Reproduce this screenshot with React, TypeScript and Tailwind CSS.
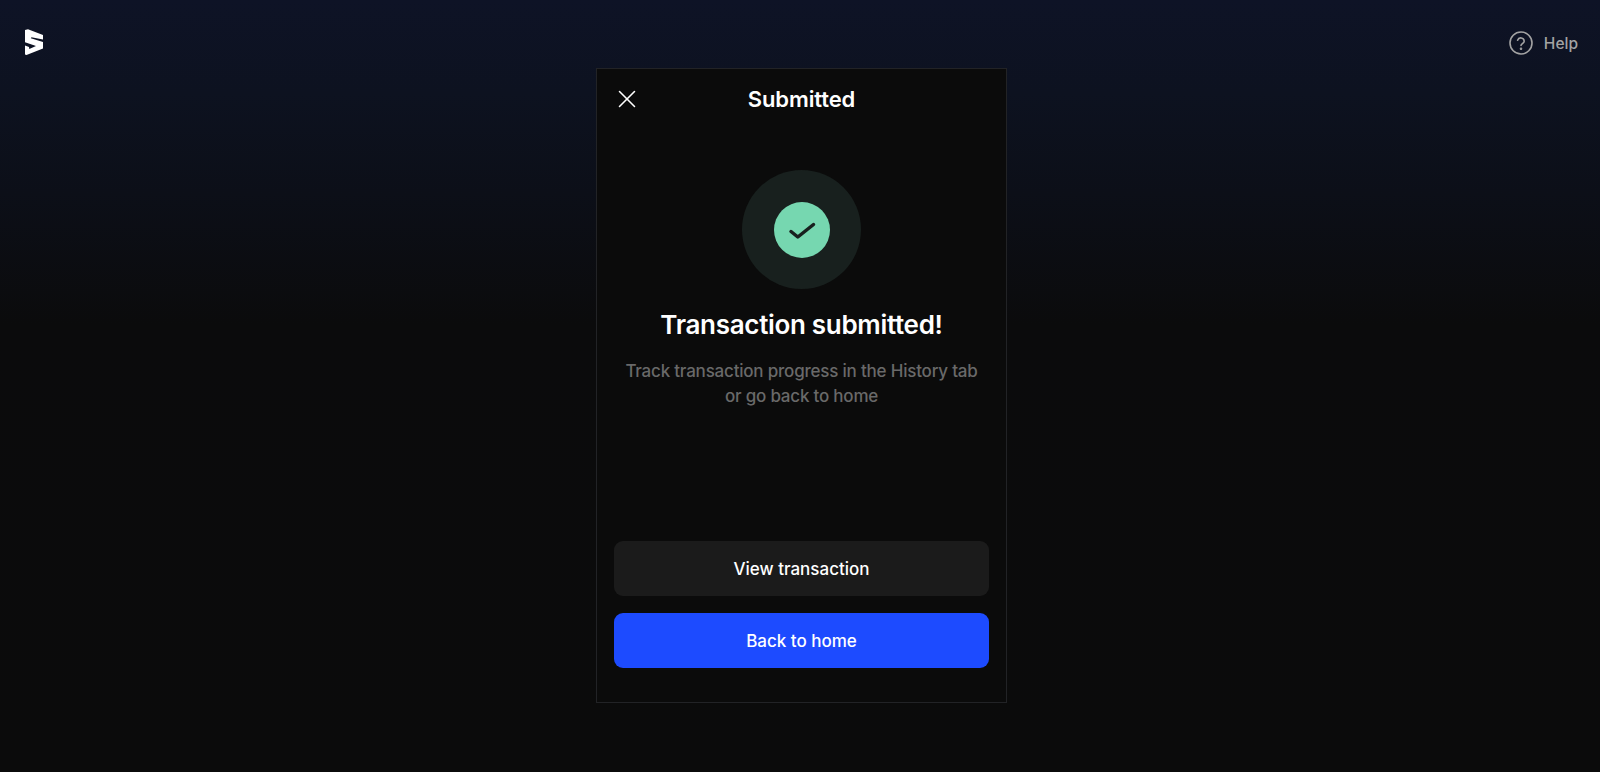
import { X } from "lucide-react";

const fontStack = "font-['Inter','Noto_Sans',sans-serif]";

function Logo() {
  return (
    <svg className="w-[18px] h-[27px]" viewBox="0 0 18 27" fill="#ffffff">
      <path d="M0 1 L3 0.3 L18 6 V10.5 L6.5 8.2 L5.8 9.2 L18 13 V19.5 L1.5 26 L0 25.5 V16.5 L4 18 L4.3 20 L11 17 L0 13.2 Z" />
    </svg>
  );
}

function HelpIcon() {
  return (
    <svg className="w-6 h-6" viewBox="0 0 24 24" fill="none" stroke="#a3a3a3" strokeWidth={1.6} strokeLinecap="round" strokeLinejoin="round">
      <circle cx="12" cy="12" r="11" />
      <path d="M8.6 9.2a3.4 3.4 0 0 1 6.6 1c0 2.2-3.2 2.6-3.2 4.3" />
      <circle cx="12" cy="17.8" r="0.5" fill="#a3a3a3" />
    </svg>
  );
}

export default function App() {
  return (
    <div className={`h-[772px] overflow-hidden flex bg-[linear-gradient(180deg,#0e1326_0%,#0d1220_12%,#0c0f18_25%,#0b0b0c_42%,#0b0b0b_100%)] ${fontStack}`}>
      <div className="w-[596px] shrink-0 pl-[25px] pt-[29px]">
        <Logo />
      </div>

      <div className="w-[411px] h-[635px] mt-[68px] shrink-0 border border-[#222326] bg-[#0b0b0b] flex flex-col">
        <div className="relative h-[60px] flex items-center justify-center">
          <X className="absolute left-[15px] top-[15px] text-white" size={30} strokeWidth={1.25} />
          <h2 className="text-[22px] font-semibold text-white tracking-[-0.005em]">Submitted</h2>
        </div>

        <div className="mt-[41px] flex flex-col items-center">
          <div className="w-[119px] h-[119px] rounded-full bg-[#18201e] flex items-center justify-center">
            <div className="w-[56px] h-[56px] rounded-full bg-[#76d7b0] flex items-center justify-center">
              <svg className="w-7 h-7" viewBox="0 0 28 28" fill="none" stroke="#18201e" strokeWidth={3.5} strokeLinecap="round" strokeLinejoin="round">
                <path d="M3 15.5 L9.8 21 L25.5 8.5" />
              </svg>
            </div>
          </div>
          <h1 className="mt-[18px] text-[26px] leading-[36px] font-semibold text-white tracking-[-0.012em]">Transaction submitted!</h1>
          <p className="mt-[16px] text-[17px] leading-[25px] font-medium text-[#696969] text-center tracking-[-0.012em]">
            Track transaction progress in the History tab
            <br />
            or go back to home
          </p>
        </div>

        <div className="mt-auto px-[17px] pb-[34px] flex flex-col gap-[17px]">
          <button className="h-[55px] pt-[2px] rounded-[9px] bg-[#1b1b1b] text-white text-[17px] font-medium">View transaction</button>
          <button className="h-[55px] pt-[2px] rounded-[9px] bg-[#1d4bff] text-white text-[17px] font-medium">Back to home</button>
        </div>
      </div>

      <div className="flex-1 flex justify-end pt-[31px] pr-[22px]">
        <div className="h-6 flex items-center gap-[11px]">
          <HelpIcon />
          <span className="pt-[2px] text-[15.5px] font-medium text-[#a3a3a3]">Help</span>
        </div>
      </div>
    </div>
  );
}
